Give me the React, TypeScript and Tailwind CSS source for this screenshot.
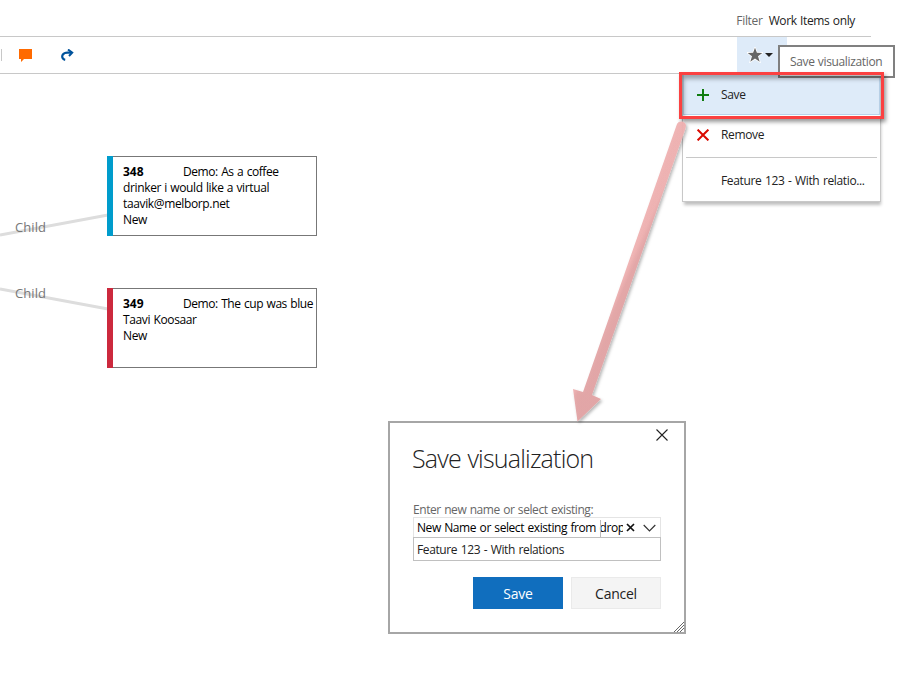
import type { ReactNode } from "react";

type NodeProps = { id: string; title: string; rest: string[]; place: string; bar: string };

function WorkItem({ id, title, rest, place, bar }: NodeProps) {
  return (
    <div className={`absolute left-[107px] flex h-20 w-[210px] border border-l-0 border-[#777] bg-white ${place}`}>
      <div className={`-my-px w-1.5 shrink-0 ${bar}`} />
      <div className="flex-1 pt-[7px] pl-[10px] text-[12px] leading-4 whitespace-nowrap text-black">
        <div className="flex">
          <span className="w-[60px] font-bold">{id}</span>
          <span className="tracking-[-0.45px] [word-spacing:0.8px]">{title}</span>
        </div>
        {rest.map((line) => (
          <div key={line} className="tracking-[-0.36px] [word-spacing:0.5px]">{line}</div>
        ))}
      </div>
    </div>
  );
}

function MenuRow({ icon, children, className = "" }: { icon?: ReactNode; children: ReactNode; className?: string }) {
  return (
    <div className={`flex items-center text-[12px] whitespace-nowrap text-[#222] ${className}`}>
      <span className="flex w-[38px] shrink-0 pl-[14px]">{icon}</span>
      <span className="tracking-[-0.36px] [word-spacing:0.8px]">{children}</span>
    </div>
  );
}

function SaveMenu() {
  return (
    <div className="absolute top-[73px] left-[682px] h-[129px] w-[199px] border border-[#c8c8c8] bg-white shadow-[1px_4px_3px_-1px_rgba(0,0,0,0.25)]">
      <div className="h-[41px] border border-[#b9d3ea] bg-[#deebf9]">
        <MenuRow
          className="-ml-px h-[39px]"
          icon={
            <svg width="12" height="12" viewBox="0 0 12 12" stroke="#107c10" strokeWidth="2">
              <path d="M6 0v12M0 6h12" />
            </svg>
          }
        >
          Save
        </MenuRow>
      </div>
      <MenuRow
        className="h-[39px]"
        icon={
          <svg width="12" height="12" viewBox="0 0 12 12" stroke="#da0a00" strokeWidth="2">
            <path d="M.6 .6l10.800 10.800M11.400 .6l-10.800 10.800" />
          </svg>
        }
      >
        Remove
      </MenuRow>
      <div className="mx-[3px] mt-[3px] h-px bg-[#c8c8c8]" />
      <MenuRow className="h-[46px]">Feature 123 - With relatio...</MenuRow>
    </div>
  );
}

function SaveDialog() {
  return (
    <div className="absolute top-[421px] left-[388px] flex h-[213px] w-[298px] flex-col border-2 border-[#a6a6a6] bg-white pr-[23px] pl-[23px]">
      <svg className="absolute top-[6px] right-[16px]" width="12" height="12" viewBox="0 0 12 12" stroke="#222" strokeWidth="1.1">
        <path d="M.5 .5l11 11M11.5 .5l-11 11" />
      </svg>
      <h1 className="mt-[17px] -ml-px h-[36px] text-[25px] leading-[36px] font-light tracking-[-0.8px] [word-spacing:0.8px] whitespace-nowrap text-[#222]">
        Save visualization
      </h1>
      <label className="mt-[25px] h-[16px] text-[12px] leading-[18px] tracking-[-0.43px] [word-spacing:0.7px] whitespace-nowrap text-[#666]">
        Enter new name or select existing:
      </label>
      <div className="flex h-[20px] w-[248px] items-center border border-b-0 border-[#e4e4e4] pl-[3px] text-[12px] text-black">
        <span className="w-[206px] overflow-hidden tracking-[-0.43px] [word-spacing:0.8px] whitespace-nowrap">
          New Name or select existing from drop
        </span>
        <svg className="ml-[3px]" width="9" height="9" viewBox="0 0 9 9" stroke="#111" strokeWidth="1.7">
          <path d="M1 1l7 7M8 1l-7 7" />
        </svg>
        <svg className="ml-[8px]" width="13" height="8" viewBox="0 0 13 8" fill="none" stroke="#333" strokeWidth="1.2">
          <path d="M.7 1l5.8 5.8L12.300 1" />
        </svg>
      </div>
      <div className="flex h-[24px] w-[248px] items-center border border-[#c0c0c0] pt-[2px] pl-[3px] text-[12px] tracking-[-0.38px] [word-spacing:0.8px] text-[#222]">
        Feature 123 - With relations
      </div>
      <div className="mt-4 flex w-[248px] justify-end gap-2 text-[14px] tracking-[-0.25px]">
        <button className="h-8 w-[90px] bg-[#106ebe] pt-px text-white">Save</button>
        <button className="h-8 w-[90px] border border-[#eaeaea] bg-[#f4f4f4] pt-px text-[#222]">Cancel</button>
      </div>
      <svg className="absolute right-0 bottom-0" width="10" height="10" viewBox="0 0 10 10" stroke="#666" strokeWidth="1">
        <path d="M0 10L10 0M3 10l7-7M6 10l4-4" />
      </svg>
      <div className="absolute top-[97px] left-[210px] h-[17px] w-px bg-[#bbb]" />
    </div>
  );
}

export default function App() {
  return (
    <div className="relative flex h-[676px] w-[905px] flex-col overflow-hidden bg-white font-['Open_Sans','Noto_Sans',sans-serif]">
      <header className="flex h-[37px] w-[871px] items-center justify-end gap-[6px] border-b border-[#c8c8c8] pt-[6px] pr-4 text-[12px] whitespace-nowrap">
        <span className="tracking-[-0.3px] text-[#666]">Filter</span>
        <span className="tracking-[-0.36px] [word-spacing:0.6px] text-[#222]">Work Items only</span>
      </header>
      <div className="flex h-[37px] w-[871px] items-center border-b border-[#c8c8c8]">
        <div className="ml-px h-3 w-px bg-[#c8c8c8]" />
        <svg className="ml-[17px]" width="13" height="13" viewBox="0 0 13 13" fill="#ff6a00">
          <path d="M0 0h13v10H5L2 13v-3H0z" />
        </svg>
        <svg className="ml-[29px]" width="13" height="12" viewBox="0 0 13 12" fill="none" stroke="#00539c">
          <path d="M4.200 10.800C1.300 10.300 .6 7.600 1.800 5.700C2.800 4.100 4.500 3.700 6.500 3.700H11" strokeWidth="2.200" />
          <path d="M7 .5L11.200 3.700L8 7" strokeWidth="2" />
        </svg>
        <div className="ml-[663px] flex h-[36px] w-[50px] items-center bg-[#deebf9] pl-[10px]">
          <svg width="16" height="16" viewBox="0 0 16 16" fill="#666" stroke="#fff" strokeWidth="1.600" style={{ paintOrder: "stroke" }}>
            <path d="M8 .8l1.900 5 5.400.1-4.300 3.300 1.700 5.500L8 11.600l-4.700 3.100 1.700-5.500L.7 5.900l5.400-.1z" />
          </svg>
          <svg className="ml-[2px]" width="8" height="4" viewBox="0 0 8 4" fill="#222">
            <path d="M0 0h8L4 4z" />
          </svg>
        </div>
      </div>
      <main className="relative flex-1">
        <svg className="absolute top-0 left-0" width="110" height="300" fill="none" stroke="#ddd" strokeWidth="3">
          <path d="M0 161L108 141M0 215L108 235" />
        </svg>
        <span className="absolute top-[143px] left-[15px] text-[13px] leading-5 tracking-[0.1px] text-[#777]">Child</span>
        <span className="absolute top-[209px] left-[15px] text-[13px] leading-5 tracking-[0.1px] text-[#777]">Child</span>
        <WorkItem
          id="348"
          title="Demo: As a coffee"
          rest={["drinker i would like a virtual", "taavik@melborp.net", "New"]}
          place="top-[82px]"
          bar="bg-[#009ccc]"
        />
        <WorkItem
          id="349"
          title="Demo: The cup was blue"
          rest={["Taavi Koosaar", "New"]}
          place="top-[214px]"
          bar="bg-[#cc293d]"
        />
      </main>
      <SaveMenu />
      <div className="absolute top-[45px] left-[778px] flex h-[33px] w-[117px] items-center border-2 border-[#808080] bg-white pt-px pl-[10px] text-[12px] tracking-[-0.34px] [word-spacing:0.4px] whitespace-nowrap text-[#666]">
        Save visualization
      </div>
      <SaveDialog />
      <div className="absolute top-[72px] left-[679px] h-[47px] w-[205px] border-3 border-[#fb4141] shadow-[2px_3px_4px_rgba(0,0,0,0.4),inset_2px_4px_4px_rgba(0,0,0,0.3)]" />
      <svg className="absolute top-0 left-0" width="905" height="676">
        <defs>
          <filter id="arrowShadow" x="-20%" y="-20%" width="140%" height="140%">
            <feDropShadow dx="1.500" dy="2" stdDeviation="1.500" floodColor="#000" floodOpacity="0.3" />
          </filter>
          <linearGradient id="arrowFill" gradientUnits="userSpaceOnUse" x1="627" y1="269" x2="636" y2="273">
            <stop offset="0" stopColor="#efb0b0" />
            <stop offset="0.5" stopColor="#e4a5a6" />
            <stop offset="1" stopColor="#e2a3a4" />
          </linearGradient>
        </defs>
        <path
          d="M677 124C679 120 686 121 686 126L685 130L592 395L601 399L577.500 421.500L573 389L583 392Z"
          fill="url(#arrowFill)"
          fillOpacity="0.94"
          filter="url(#arrowShadow)"
        />
      </svg>
    </div>
  );
}
